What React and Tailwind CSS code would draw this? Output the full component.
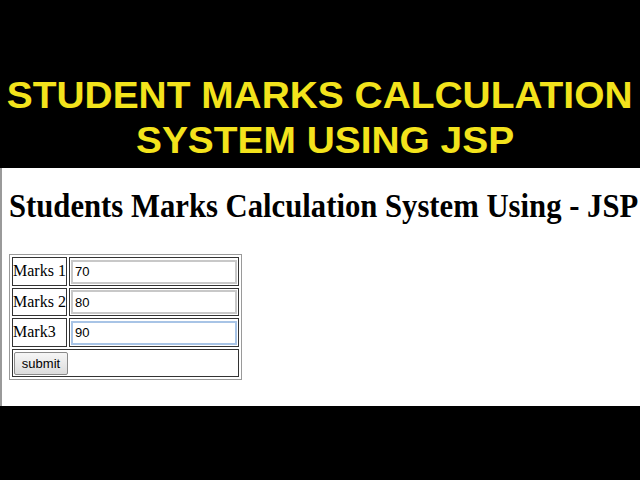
export default function App() {
  const rows = [
    { label: 'Marks 1', value: '70' },
    { label: 'Marks 2', value: '80' },
    { label: 'Mark3', value: '90', focus: true },
  ];

  return (
    <div className="flex h-[480px] w-[640px] flex-col bg-black">
      <div className="flex h-[168px] flex-col items-center justify-end pb-[5px] font-['Liberation_Sans',Arial,sans-serif] text-[36px] font-bold leading-[45px] text-[#f3e31c]">
        <div className="scale-x-[1.08] whitespace-nowrap">STUDENT MARKS CALCULATION</div>
        <div className="translate-x-[5px] scale-x-[1.08] whitespace-nowrap">SYSTEM USING JSP</div>
      </div>
      <div className="h-[238px] overflow-hidden border-l-2 border-[#9a9a9a] bg-white pl-[7px] pt-[18px] font-['Liberation_Serif','Times_New_Roman',serif]">
        <h1 className="origin-left scale-x-[0.93] whitespace-nowrap text-[33px] font-bold leading-[40px] text-black">
          Students Marks Calculation System Using - JSP
        </h1>
        <table className="mt-[28px] border-separate border-spacing-[2px] border border-[#9a9a9a]">
          <tbody>
            {rows.map((r) => (
              <tr key={r.label}>
                <td className="h-[28px] w-[55px] whitespace-nowrap border border-[#333] px-0 text-[16px] leading-none text-black">
                  {r.label}
                </td>
                <td className="w-[170px] border border-[#333] p-[1px]">
                  <input
                    readOnly
                    value={r.value}
                    className={
                      r.focus
                        ? 'h-[24px] w-full border-2 border-[#a8c4e6] bg-white px-[2px] font-["Liberation_Sans",Arial,sans-serif] text-[13px] text-black outline-none'
                        : 'h-[24px] w-full border-2 border-[#c8c8c8] bg-white px-[2px] font-["Liberation_Sans",Arial,sans-serif] text-[13px] text-black outline-none'
                    }
                  />
                </td>
              </tr>
            ))}
            <tr>
              <td colSpan={2} className="h-[28px] border border-[#333] p-[1px]">
                <button className="h-[23px] w-[54px] rounded-[2px] border border-[#8a8a8a] bg-gradient-to-b from-[#f6f6f6] to-[#dcdcdc] font-['Liberation_Sans',Arial,sans-serif] text-[13px] text-black">
                  submit
                </button>
              </td>
            </tr>
          </tbody>
        </table>
      </div>
    </div>
  );
}
